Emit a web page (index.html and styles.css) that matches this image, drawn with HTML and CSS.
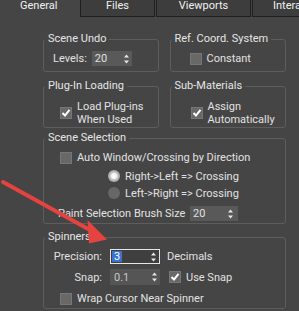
FILE: index.html
```html
<!DOCTYPE html>
<html>
<head>
<meta charset="utf-8">
<link rel="stylesheet" href="styles.css">
</head>
<body>
<div class="tabs">
  <div class="tab active">General</div>
  <div class="tab files">Files</div>
  <div class="tab viewports">Viewports</div>
  <div class="tab inter">Interaction Mode</div>
</div>
<div class="panel">
  <div class="pair first">
    <fieldset class="group left">
      <legend>Scene Undo</legend>
      <div class="body undo">
        <span>Levels:</span>
        <div class="spin w40"><span>20</span><svg class="arr" width="5" height="10" viewBox="0 0 5 10"><polygon points="2.5,0.5 5,3.5 0,3.5"/><polygon points="0,6.5 5,6.5 2.5,9.5"/></svg></div>
      </div>
    </fieldset>
    <fieldset class="group right">
      <legend>Ref. Coord. System</legend>
      <div class="body ref">
        <span class="cb"></span><span>Constant</span>
      </div>
    </fieldset>
  </div>
  <div class="pair second">
    <fieldset class="group left">
      <legend>Plug-In Loading</legend>
      <div class="body two-line plug">
        <span class="cb on"><svg width="10" height="10" viewBox="0 0 10 10"><path d="M1.5 5 L4 7.5 L8.5 1.8"/></svg></span>
        <span>Load Plug-ins<br>When Used</span>
      </div>
    </fieldset>
    <fieldset class="group right">
      <legend>Sub-Materials</legend>
      <div class="body two-line sub">
        <span class="cb on"><svg width="10" height="10" viewBox="0 0 10 10"><path d="M1.5 5 L4 7.5 L8.5 1.8"/></svg></span>
        <span>Assign<br>Automatically</span>
      </div>
    </fieldset>
  </div>
  <fieldset class="group full selection">
    <legend>Scene Selection</legend>
    <div class="body sel">
      <div class="line auto"><span class="cb"></span><span>Auto Window/Crossing by Direction</span></div>
      <div class="line radio r1"><span class="rb on"></span><span>Right-&gt;Left =&gt; Crossing</span></div>
      <div class="line radio r2"><span class="rb"></span><span>Left-&gt;Right =&gt; Crossing</span></div>
      <div class="line brush"><span class="brush-lbl">Paint Selection Brush Size</span>
        <div class="spin w48"><span>20</span><svg class="arr" width="5" height="10" viewBox="0 0 5 10"><polygon points="2.5,0.5 5,3.5 0,3.5"/><polygon points="0,6.5 5,6.5 2.5,9.5"/></svg></div>
      </div>
    </div>
  </fieldset>
  <fieldset class="group full spinners">
    <legend>Spinners</legend>
    <div class="body spn">
      <div class="grid">
        <span class="rlbl">Precision:</span>
        <div class="spin focus"><span class="sel-txt">3</span><svg class="arr" width="5" height="10" viewBox="0 0 5 10"><polygon points="2.5,0.5 5,3.5 0,3.5"/><polygon points="0,6.5 5,6.5 2.5,9.5"/></svg></div>
        <span>Decimals</span>
        <span class="rlbl">Snap:</span>
        <div class="spin snap"><span class="dim">0.1</span><svg class="arr" width="5" height="10" viewBox="0 0 5 10"><polygon points="2.5,0.5 5,3.5 0,3.5"/><polygon points="0,6.5 5,6.5 2.5,9.5"/></svg></div>
        <div class="usesnap"><span class="cb on"><svg width="10" height="10" viewBox="0 0 10 10"><path d="M1.5 5 L4 7.5 L8.5 1.8"/></svg></span><span>Use Snap</span></div>
      </div>
      <div class="line wrap"><span class="cb"></span><span>Wrap Cursor Near Spinner</span></div>
    </div>
  </fieldset>
</div>
<svg class="pointer" width="299" height="311" viewBox="0 0 299 311">
  <line x1="3" y1="182" x2="90" y2="230" stroke="#e4433f" stroke-width="4" stroke-linecap="round"/>
  <polygon points="107,239.5 87.5,220 89,243.5" fill="#e4433f"/>
</svg>
</body>
</html>
```

FILE: styles.css
```css
html, body {
  margin: 0;
  padding: 0;
}
body {
  width: 299px;
  height: 311px;
  overflow: hidden;
  position: relative;
  background: #454545;
  color: #e2e2e2;
  font-family: Roboto, "Liberation Sans", sans-serif;
  font-size: 11px;
}
.tabs {
  display: flex;
  height: 17px;
  white-space: nowrap;
  overflow: hidden;
}
.tab {
  box-sizing: border-box;
  height: 17px;
  line-height: 12px;
  color: #f0f0f0;
  flex: none;
}
.tab.active {
  width: 80px;
  padding-left: 20px;
}
.tab.files, .tab.viewports, .tab.inter {
  background: #3d3d3d;
  border: 1px solid #1f1f1f;
  border-top: none;
  text-align: center;
}
.tab.files { width: 75px; }
.tab.viewports { width: 95px; margin-left: 1px; }
.tab.inter { margin-left: 1px; text-align: left; padding: 0 20px 0 20px; }

.panel {
  padding: 15px 0 0 43px;
  width: 243px;
}
.pair {
  display: flex;
  gap: 11px;
}
.pair.second { margin-top: 7px; }
.group {
  margin: 0;
  padding: 0;
  min-width: 0;
  box-sizing: border-box;
  border: 1px solid #5d5d5d;
  border-radius: 3px;
}
.group.left { width: 116px; }
.group.right { width: 117px; }
.group.full { width: 243px; }
.group.selection { margin-top: 3px; }
.group.spinners { margin-top: 6px; }
.group legend {
  padding: 0 3px;
  margin-left: 1px;
  height: 14px;
  line-height: 14px;
  color: #e6e6e6;
}
.body {
  display: flex;
  align-items: center;
}
.undo {
  padding: 5px 0 5px 9px;
  height: 15px;
  gap: 5px;
}
.ref {
  padding: 5px 0 5px 19px;
  height: 15px;
  gap: 5px;
}
.two-line {
  padding: 7px 0 1px 16px;
  gap: 5px;
  line-height: 13px;
}
.sub { padding-left: 20px; }

.spin {
  box-sizing: border-box;
  height: 15px;
  background: #595959;
  display: flex;
  align-items: center;
  justify-content: space-between;
  padding: 0 3px 0 3px;
  color: #e0e0e0;
}
.spin.w40 { width: 40px; }
.spin.w48 { width: 48px; padding-right: 5px; }
.arr { fill: #e8e8e8; flex: none; }

.cb {
  box-sizing: border-box;
  width: 12px;
  height: 12px;
  flex: none;
  background: #686868;
  border: 1px solid #767676;
  display: flex;
  align-items: center;
  justify-content: center;
}
.cb svg path {
  fill: none;
  stroke: #ffffff;
  stroke-width: 2;
}
.rb {
  box-sizing: border-box;
  width: 12px;
  height: 12px;
  border-radius: 50%;
  flex: none;
  background: #676767;
}
.rb.on {
  background: radial-gradient(circle, #ffffff 0, #f4f4f4 2.5px, #bdbdbd 4px, #a8a8a8 6px);
}

.sel {
  display: block;
  padding: 5px 0 2px 0;
}
.line {
  display: flex;
  align-items: center;
  gap: 5px;
}
.auto { height: 15px; padding-left: 16px; }
.radio { height: 16px; padding-left: 64px; }
.r1 { margin-top: 3px; }
.r2 { margin-top: 1px; }
.brush { height: 15px; margin-top: 5px; padding-left: 14px; gap: 0; }
.brush-lbl { width: 132px; white-space: nowrap; }

.spn {
  display: block;
  padding: 5px 0 3px 0;
}
.grid {
  display: grid;
  grid-template-columns: 58px 50px auto;
  grid-template-rows: 15px 16px;
  column-gap: 8px;
  row-gap: 5px;
  align-items: center;
}
.grid > :nth-child(3n) { margin-left: -1px; }
.rlbl { text-align: right; }
.spin.focus {
  height: 15px;
  background: #3f3f3f;
  border: 1px solid #e6e6e6;
  padding: 0 3px 0 1px;
}
.sel-txt {
  background: #3a72d0;
  color: #ffffff;
  padding: 0 2px;
  line-height: 11px;
}
.spin.snap {
  height: 16px;
  background: #555555;
  padding-left: 4px;
}
.dim { color: #c8c8c8; }
.usesnap {
  display: flex;
  align-items: center;
  gap: 5px;
  padding-left: 2px;
}
.wrap {
  height: 13px;
  margin-top: 7px;
  padding-left: 16px;
}
.pointer {
  position: absolute;
  left: 0;
  top: 0;
  pointer-events: none;
}
```
